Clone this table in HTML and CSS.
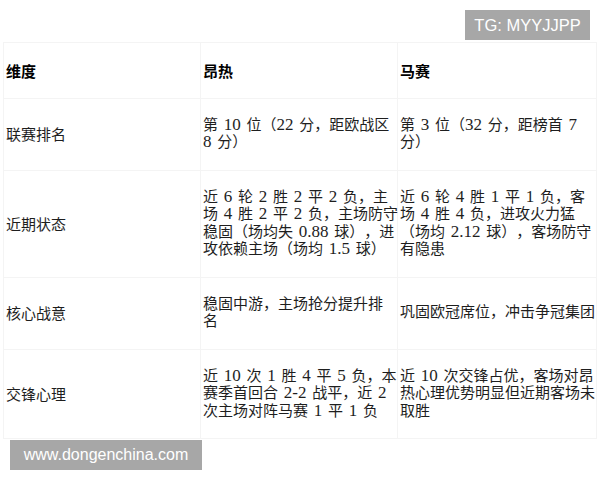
FILE: index.html
```html
<!DOCTYPE html>
<html lang="zh-CN">
<head>
<meta charset="utf-8">
<title>昂热 vs 马赛</title>
<link rel="stylesheet" href="styles.css">
</head>
<body>
<div class="tag tag-top">TG: MYYJJPP</div>
<table class="compare">
  <colgroup>
    <col class="c1"><col class="c2"><col class="c3">
  </colgroup>
  <thead>
    <tr><th>维度</th><th>昂热</th><th>马赛</th></tr>
  </thead>
  <tbody>
    <tr>
      <td>联赛排名</td>
      <td>第 <span class="num">10</span> 位（<span class="num">22</span> 分，距欧战区<br><span class="num">8</span> 分）</td>
      <td>第 <span class="num">3</span> 位（<span class="num">32</span> 分，距榜首 <span class="num">7</span><br>分）</td>
    </tr>
    <tr>
      <td>近期状态</td>
      <td>近 <span class="num">6</span> 轮 <span class="num">2</span> 胜 <span class="num">2</span> 平 <span class="num">2</span> 负，主<br>场 <span class="num">4</span> 胜 <span class="num">2</span> 平 <span class="num">2</span> 负，主场防守<br>稳固（场均失 <span class="num">0.88</span> 球），进<br>攻依赖主场（场均 <span class="num">1.5</span> 球）</td>
      <td>近 <span class="num">6</span> 轮 <span class="num">4</span> 胜 <span class="num">1</span> 平 <span class="num">1</span> 负，客<br>场 <span class="num">4</span> 胜 <span class="num">4</span> 负，进攻火力猛<br>（场均 <span class="num">2.12</span> 球），客场防守<br>有隐患</td>
    </tr>
    <tr>
      <td>核心战意</td>
      <td>稳固中游，主场抢分提升排<br>名</td>
      <td>巩固欧冠席位，冲击争冠集团</td>
    </tr>
    <tr>
      <td>交锋心理</td>
      <td>近 <span class="num">10</span> 次 <span class="num">1</span> 胜 <span class="num">4</span> 平 <span class="num">5</span> 负，本<br>赛季首回合 <span class="num">2-2</span> 战平，近 <span class="num">2</span><br>次主场对阵马赛 <span class="num">1</span> 平 <span class="num">1</span> 负</td>
      <td>近 <span class="num">10</span> 次交锋占优，客场对昂<br>热心理优势明显但近期客场未<br>取胜</td>
    </tr>
  </tbody>
</table>
<div class="tag tag-bottom">www.dongenchina.com</div>
</body>
</html>
```
FILE: styles.css
```css
html, body {
  margin: 0;
  padding: 0;
  background: #ffffff;
}
body {
  width: 600px;
  height: 480px;
  overflow: hidden;
  position: relative;
  font-family: "Liberation Serif", "Noto Sans CJK SC", sans-serif;
  color: #1e1e1e;
  text-spacing-trim: space-all;
}
.compare {
  margin: 42px 0 0 3px;
  width: 593px;
  border-collapse: collapse;
  table-layout: fixed;
}
.c1 { width: 197px; }
.c2 { width: 197px; }
.c3 { width: 199px; }
.compare th,
.compare td {
  border: 1px solid #f4f4f4;
  padding: 18px 2px;
  font-size: 15px;
  line-height: 17.5px;
  text-align: left;
  vertical-align: middle;
  white-space: nowrap;
  word-spacing: 2px;
}
.num {
  font-family: "Liberation Serif", serif;
  font-size: 17px;
  line-height: 0;
}
.compare th {
  font-family: "Noto Sans CJK SC", sans-serif;
  font-weight: 700;
  color: #000;
  padding-top: 18.5px;
  padding-bottom: 18.5px;
}
.compare td:first-child {
  font-family: "Noto Sans CJK SC", sans-serif;
}
.tag {
  position: absolute;
  background: #a7a7a7;
  color: #ffffff;
  font-family: "Liberation Sans", Arial, sans-serif;
  font-size: 16px;
  line-height: 30px;
  text-align: center;
}
.tag-top {
  left: 465px;
  top: 10px;
  width: 125px;
  height: 30px;
  font-size: 16.5px;
}
.tag-bottom {
  left: 10px;
  top: 440px;
  width: 192px;
  height: 30px;
}
```
